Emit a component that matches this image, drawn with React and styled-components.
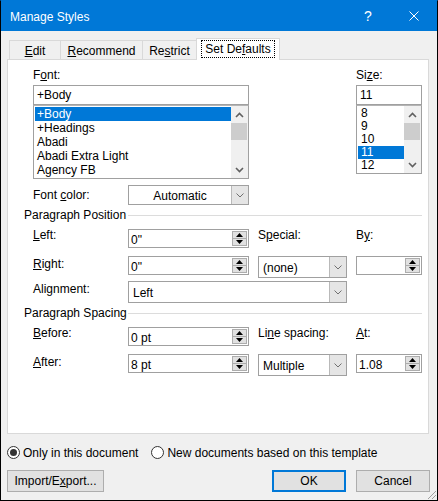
import React from 'react';
import styled, { createGlobalStyle } from 'styled-components';

const Global = createGlobalStyle`
  html, body { margin: 0; padding: 0; background: #ffffff; }
  body { font-family: "Liberation Sans", Arial, sans-serif; font-size: 12px; }
  * { box-sizing: border-box; }
`;

const FONT = `"Liberation Sans", Arial, sans-serif`;
const COLS = '95px 121px 9px 89px 9px 66px';

const Window = styled.div`
  position: relative;
  width: 438px;
  height: 501px;
  border: 1px solid #000;
  border-top-color: #0078d7;
  background: #f0f0f0;
  display: flex;
  flex-direction: column;
  font-family: ${FONT};
  font-size: 12px;
  color: #000;
  overflow: hidden;
`;

const TitleBar = styled.div`
  height: 30px;
  flex: none;
  background: #0078d7;
  color: #fff;
  display: flex;
  align-items: center;
`;

const Title = styled.div`
  flex: 1;
  padding-left: 9px;
  font-size: 12px;
  line-height: 14px;
  padding-top: 1px;
`;

const CaptionButton = styled.div`
  width: 46px;
  height: 30px;
  display: flex;
  align-items: center;
  justify-content: center;
  color: #fff;
  font-size: 14px;
`;

const Body = styled.div`
  flex: 1;
  display: flex;
  flex-direction: column;
  padding: 7px 7px 0 6px;
`;

const TabStrip = styled.div`
  display: flex;
  align-items: flex-end;
  height: 21px;
  margin-left: 2px;
`;

const Tab = styled.div`
  position: relative;
  width: ${p => p.$w}px;
  height: ${p => (p.$active ? 22 : 19)}px;
  margin-left: ${p => (p.$first ? 0 : -1)}px;
  margin-bottom: ${p => (p.$active ? -1 : 0)}px;
  z-index: ${p => (p.$active ? 1 : 0)};
  border: 1px solid #d9d9d9;
  border-bottom: none;
  background: ${p => (p.$active ? '#ffffff' : '#f0f0f0')};
  display: flex;
  justify-content: center;
  align-items: flex-start;
  padding-top: ${p => (p.$active ? 2 : 3)}px;
  line-height: 14px;
  white-space: nowrap;
`;

const FocusText = styled.span`
  outline: 1px dotted #000;
  outline-offset: 0;
  padding: 1px 3px;
  line-height: 14px;
`;

const Panel = styled.div`
  width: 422px;
  height: 375px;
  border: 1px solid #d9d9d9;
  background: #fff;
  display: flex;
  flex-direction: column;
`;

const FontSection = styled.div`
  display: grid;
  grid-template-columns: ${COLS};
  grid-template-rows: 17px 20px 74px;
  padding: 8px 0 0 25px;
`;

const Label = styled.div`
  grid-column: ${p => p.$col || 'auto'};
  line-height: 14px;
  white-space: nowrap;
  margin-top: ${p => p.$dy || 0}px;
`;

const TextBox = styled.div`
  grid-column: ${p => p.$col};
  border: 1px solid #a0a0a0;
  background: #fff;
  height: 20px;
  display: flex;
  align-items: center;
  padding-left: 3px;
  line-height: 14px;
`;

const ListBox = styled.div`
  grid-column: ${p => p.$col};
  border: 1px solid #a0a0a0;
  border-top-color: #b4b4b4;
  margin-top: ${p => p.$mt || 0}px;
  height: ${p => p.$h}px;
  display: flex;
  background: #fff;
`;

const ListItems = styled.div`
  flex: 1;
  padding: 1px 0 1px 1px;
  overflow: hidden;
`;

const ListItem = styled.div`
  height: ${p => p.$h}px;
  line-height: ${p => p.$h}px;
  padding-left: ${p => p.$pad}px;
  background: ${p => (p.$sel ? '#0078d7' : 'transparent')};
  color: ${p => (p.$sel ? '#fff' : '#000')};
  white-space: nowrap;
`;

const ScrollBar = styled.div`
  width: 17px;
  background: #f0f0f0;
  display: flex;
  flex-direction: column;
`;

const ScrollArrow = styled.div`
  height: 17px;
  display: flex;
  align-items: center;
  justify-content: center;
`;

const ScrollThumb = styled.div`
  height: 17px;
  margin: 0 1px 0 0;
  background: #cdcdcd;
`;

const ScrollTrack = styled.div`
  flex: 1;
`;

const Row = styled.div`
  display: grid;
  grid-template-columns: ${COLS};
  align-items: ${p => p.$align || 'start'};
  height: ${p => p.$h}px;
  margin-top: ${p => p.$mt}px;
  padding-left: 25px;
`;

const GroupHeader = styled.div`
  display: grid;
  grid-template-columns: 104px 1fr;
  align-items: center;
  height: 20px;
  padding: 0 6px 0 16px;
  line-height: 14px;
`;

const Rule = styled.div`
  height: 1px;
  background: #dcdcdc;
`;

const Combo = styled.div`
  grid-column: ${p => p.$col};
  height: ${p => p.$h}px;
  border: 1px solid #a0a0a0;
  background: #fff;
  display: flex;
  align-items: stretch;
`;

const ComboText = styled.div`
  flex: 1;
  display: flex;
  align-items: center;
  justify-content: ${p => (p.$center ? 'center' : 'flex-start')};
  padding-left: ${p => (p.$center ? 0 : 4)}px;
  padding-top: 1px;
  line-height: 14px;
`;

const ComboArrow = styled.div`
  width: 17px;
  border-left: 1px solid #b9b9b9;
  background: #e5e5e5;
  display: flex;
  align-items: center;
  justify-content: center;
`;

const Spin = styled.div`
  grid-column: ${p => p.$col};
  height: ${p => p.$h}px;
  border: 1px solid #a0a0a0;
  background: #fff;
  display: flex;
  align-items: stretch;
  padding: 1px 1px 1px 0;
`;

const SpinText = styled.div`
  flex: 1;
  display: flex;
  align-items: center;
  padding-left: 2px;
  padding-top: 2px;
  line-height: 14px;
`;

const SpinButtons = styled.div`
  width: 15px;
  display: flex;
  flex-direction: column;
  gap: 0;
`;

const SpinButton = styled.div`
  flex: 1;
  border: 1px solid #adadad;
  margin-top: ${p => (p.$down ? -1 : 0)}px;
  background: #e1e1e1;
  display: flex;
  align-items: center;
  justify-content: center;
`;

const RadioRow = styled.div`
  display: flex;
  align-items: center;
  height: 13px;
  margin-top: 12px;
`;

const RadioOption = styled.label`
  display: flex;
  align-items: center;
  gap: 3px;
  margin-right: ${p => p.$mr || 0}px;
  line-height: 14px;
  white-space: nowrap;
`;

const RadioCircle = styled.span`
  width: 13px;
  height: 13px;
  border-radius: 50%;
  border: 1px solid #333;
  background: #fff;
  display: flex;
  align-items: center;
  justify-content: center;
  &::after {
    content: '';
    width: 7px;
    height: 7px;
    border-radius: 50%;
    background: ${p => (p.$on ? '#333' : 'transparent')};
  }
`;

const ButtonRow = styled.div`
  display: flex;
  height: 22px;
  margin-top: 11px;
`;

const Button = styled.div`
  width: ${p => p.$w}px;
  height: 22px;
  margin-left: ${p => p.$ml || 0}px;
  border: ${p => (p.$default ? '2px solid #0078d7' : '1px solid #adadad')};
  background: #e1e1e1;
  display: flex;
  align-items: center;
  justify-content: center;
  line-height: 14px;
`;

const Spacer = styled.div`
  flex: 1;
`;

const Grip = styled.svg`
  position: absolute;
  right: 0;
  bottom: 0;
`;

const ChevronDown = () => (
  <svg width="8" height="5" viewBox="0 0 8 5">
    <path d="M0.5 0.5 L4 4 L7.5 0.5" fill="none" stroke="#707070" strokeWidth="1" />
  </svg>
);

const ScrollChevron = ({ up }) => (
  <svg width="9" height="6" viewBox="0 0 9 6">
    <path
      d={up ? 'M1 5 L4.5 1.5 L8 5' : 'M1 1 L4.5 4.5 L8 1'}
      fill="none"
      stroke="#606060"
      strokeWidth="1.6"
    />
  </svg>
);

const Tri = ({ up }) => (
  <svg width="7" height="4" viewBox="0 0 7 4">
    <path d={up ? 'M0 4 L3.5 0 L7 4Z' : 'M0 0 L3.5 4 L7 0Z'} fill="#000" />
  </svg>
);

const SpinBox = ({ col, h = 19, value }) => (
  <Spin $col={col} $h={h}>
    <SpinText>{value}</SpinText>
    <SpinButtons>
      <SpinButton><Tri up /></SpinButton>
      <SpinButton $down><Tri /></SpinButton>
    </SpinButtons>
  </Spin>
);

const Dropdown = ({ col, h = 22, value, center }) => (
  <Combo $col={col} $h={h}>
    <ComboText $center={center}>{value}</ComboText>
    <ComboArrow><ChevronDown /></ComboArrow>
  </Combo>
);

const Scroll = () => (
  <ScrollBar>
    <ScrollArrow><ScrollChevron up /></ScrollArrow>
    <ScrollThumb />
    <ScrollTrack />
    <ScrollArrow><ScrollChevron /></ScrollArrow>
  </ScrollBar>
);

const tabs = [
  { w: 52, label: <><u>E</u>dit</> },
  { w: 83, label: <><u>R</u>ecommend</> },
  { w: 55, label: <>Re<u>s</u>trict</> },
  { w: 84, label: <>Set De<u>f</u>aults</>, active: true },
];

const fonts = ['+Body', '+Headings', 'Abadi', 'Abadi Extra Light', 'Agency FB'];
const sizes = ['8', '9', '10', '11', '12'];

export default function App() {
  return (
    <>
      <Global />
      <Window>
        <TitleBar>
          <Title>Manage Styles</Title>
          <CaptionButton>?</CaptionButton>
          <CaptionButton>
            <svg width="10" height="10" viewBox="0 0 10 10">
              <path d="M0.5 0.5 L9.5 9.5 M9.5 0.5 L0.5 9.5" stroke="#fff" strokeWidth="1" />
            </svg>
          </CaptionButton>
        </TitleBar>
        <Body>
          <TabStrip>
            {tabs.map((t, i) => (
              <Tab key={i} $w={t.w} $first={i === 0} $active={t.active}>
                {t.active ? <FocusText>{t.label}</FocusText> : t.label}
              </Tab>
            ))}
          </TabStrip>
          <Panel>
            <FontSection>
              <Label $col="1 / 3">F<u>o</u>nt:</Label>
              <Label $col="6">Si<u>z</u>e:</Label>
              <TextBox $col="1 / 3">+Body</TextBox>
              <TextBox $col="6">11</TextBox>
              <ListBox $col="1 / 3" $h={74}>
                <ListItems>
                  {fonts.map((f, i) => (
                    <ListItem key={f} $h={14} $pad={2} $sel={i === 0}>{f}</ListItem>
                  ))}
                </ListItems>
                <Scroll />
              </ListBox>
              <ListBox $col="6" $h={69}>
                <ListItems>
                  {sizes.map(s => (
                    <ListItem key={s} $h={13} $pad={3} $sel={s === '11'}>{s}</ListItem>
                  ))}
                </ListItems>
                <Scroll />
              </ListBox>
            </FontSection>

            <Row $h={20} $mt={6} $align="center">
              <Label>Font <u>c</u>olor:</Label>
              <Dropdown col="2" h={20} value="Automatic" center />
            </Row>

            <GroupHeader>
              <span>Paragraph Position</span>
              <Rule />
            </GroupHeader>

            <Row $h={19} $mt={4}>
              <Label $dy={-1}><u>L</u>eft:</Label>
              <SpinBox col="2" value={'0"'} />
              <Label $col="4" $dy={-1}>S<u>p</u>ecial:</Label>
              <Label $col="6" $dy={-1}>B<u>y</u>:</Label>
            </Row>

            <Row $h={22} $mt={8}>
              <Label $dy={1}><u>R</u>ight:</Label>
              <SpinBox col="2" value={'0"'} />
              <Dropdown col="4" value="(none)" />
              <SpinBox col="6" value="" />
            </Row>

            <Row $h={22} $mt={3}>
              <Label $dy={1}>Ali<u>g</u>nment:</Label>
              <Dropdown col="2 / 5" value="Left" />
            </Row>

            <GroupHeader>
              <span>Paragraph Spacing</span>
              <Rule />
            </GroupHeader>

            <Row $h={19} $mt={4}>
              <Label $dy={-1}><u>B</u>efore:</Label>
              <SpinBox col="2" value="0 pt" />
              <Label $col="4" $dy={-1}>Li<u>n</u>e spacing:</Label>
              <Label $col="6" $dy={-1}><u>A</u>t:</Label>
            </Row>

            <Row $h={22} $mt={8}>
              <Label $dy={1}><u>A</u>fter:</Label>
              <SpinBox col="2" value="8 pt" />
              <Dropdown col="4" value="Multiple" />
              <SpinBox col="6" value="1.08" />
            </Row>
          </Panel>

          <RadioRow>
            <RadioOption $mr={13}>
              <RadioCircle $on />
              Only in this document
            </RadioOption>
            <RadioOption>
              <RadioCircle />
              New documents based on this template
            </RadioOption>
          </RadioRow>

          <ButtonRow>
            <Button $w={97}>Import/E<u>x</u>port...</Button>
            <Spacer />
            <Button $w={74} $default>OK</Button>
            <Button $w={74} $ml={10}>Cancel</Button>
          </ButtonRow>
        </Body>
        <Grip width="12" height="12" viewBox="0 0 12 12">
          <path d="M11 3 L3 11 M11 7 L7 11" stroke="#a0a0a0" strokeWidth="1" />
        </Grip>
      </Window>
    </>
  );
}
